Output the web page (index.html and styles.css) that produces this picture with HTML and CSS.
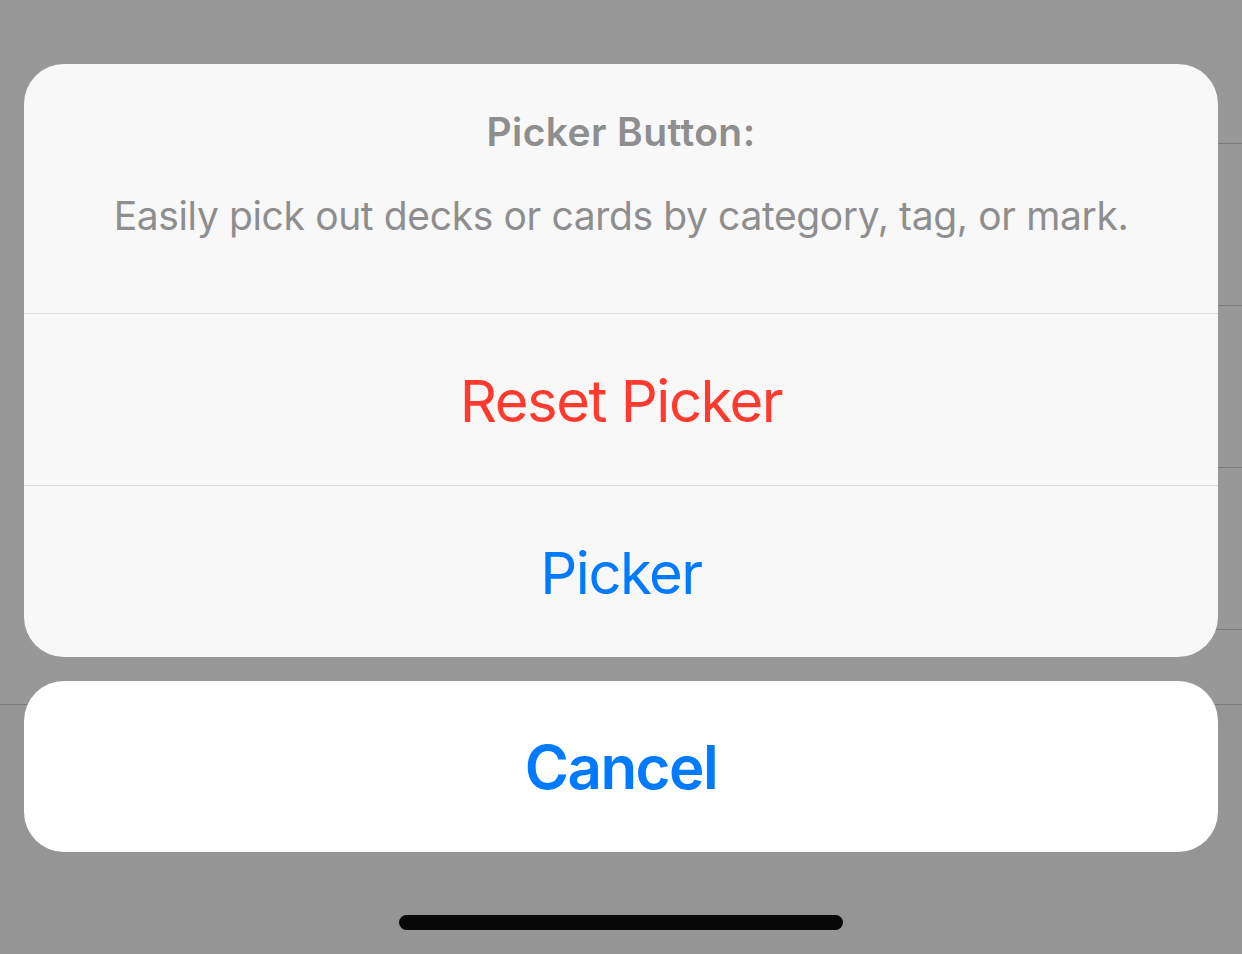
FILE: index.html
```html
<!DOCTYPE html>
<html lang="en">
<head>
<meta charset="utf-8">
<title>Picker Button</title>
<link rel="stylesheet" href="styles.css">
</head>
<body>
<div class="backdrop">
  <div class="bg-top"></div>
  <div class="bg-row"></div>
  <div class="bg-row"></div>
  <div class="bg-row"></div>
  <div class="bg-row short"></div>
  <div class="bg-section"></div>
</div>
<div class="overlay">
  <div class="sheet">
    <div class="group">
      <div class="header">
        <div class="title">Picker Button:</div>
        <div class="message">Easily pick out decks or cards by category, tag, or mark.</div>
      </div>
      <div class="action destructive">Reset Picker</div>
      <div class="action">Picker</div>
    </div>
    <div class="cancel">Cancel</div>
  </div>
  <div class="home-indicator"></div>
</div>
</body>
</html>
```
FILE: styles.css
```css
html, body {
  margin: 0;
  padding: 0;
}
body {
  width: 1242px;
  height: 954px;
  overflow: hidden;
  background: #989898;
  font-family: Inter, "Noto Sans", "Liberation Sans", sans-serif;
  position: relative;
}
.backdrop {
  display: flex;
  flex-direction: column;
}
.bg-top {
  height: 143px;
}
.bg-row {
  height: 161px;
  border-top: 1px solid #7c7c7c;
  margin-left: 60px;
}
.bg-row.short {
  height: 74px;
}
.bg-section {
  height: 250px;
  border-top: 1px solid #7c7c7c;
  background: #959595;
}
.overlay {
  position: absolute;
  top: 64px;
  left: 24px;
  right: 24px;
  display: flex;
  flex-direction: column;
  align-items: center;
}
.sheet {
  width: 100%;
  display: flex;
  flex-direction: column;
  gap: 24px;
}
.group {
  background: #f8f8f8;
  border-radius: 40px;
  overflow: hidden;
  display: flex;
  flex-direction: column;
}
.header {
  height: 249px;
  box-sizing: border-box;
  padding: 44px 20px 0;
  text-align: center;
  color: #8e8e8e;
}
.title {
  font-size: 39px;
  line-height: 47px;
  font-weight: 600;
  letter-spacing: 0.4px;
}
.message {
  margin-top: 37px;
  font-size: 39px;
  line-height: 47px;
  font-weight: 400;
  letter-spacing: -0.37px;
}
.action {
  height: 172px;
  border-top: 1px solid #dcdcdc;
  display: flex;
  align-items: center;
  justify-content: center;
  padding-top: 3px;
  box-sizing: border-box;
  font-size: 58px;
  letter-spacing: -1.5px;
  color: #007aff;
}
.action.destructive {
  color: #ff3b30;
}
.cancel {
  height: 171px;
  background: #ffffff;
  border-radius: 40px;
  display: flex;
  align-items: center;
  justify-content: center;
  padding-top: 1px;
  box-sizing: border-box;
  font-size: 60px;
  font-weight: 600;
  letter-spacing: -1.5px;
  color: #007aff;
}
.home-indicator {
  margin-top: 63px;
  width: 444px;
  height: 15px;
  border-radius: 8px;
  background: #080808;
}
```
